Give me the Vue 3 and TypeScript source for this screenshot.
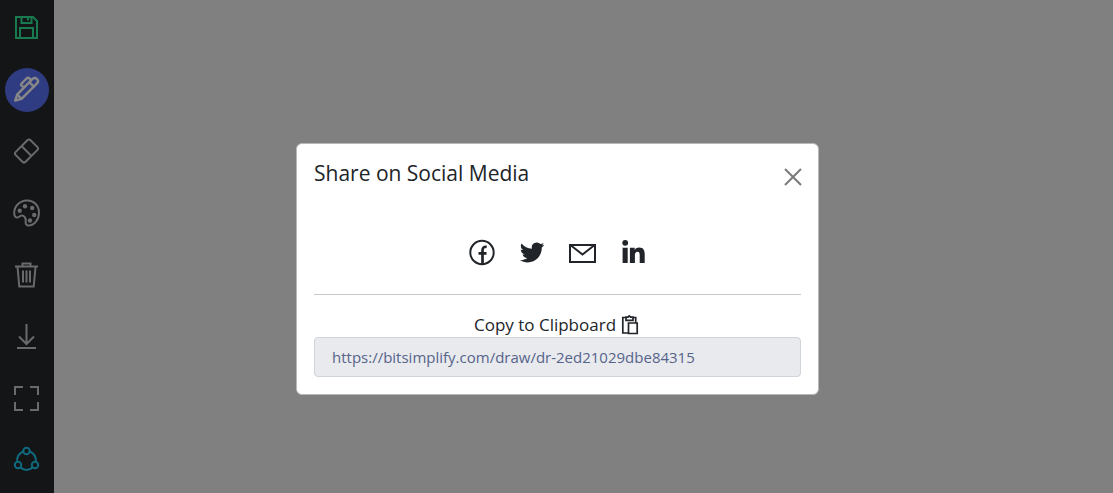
<script setup lang="ts">
import { ref } from 'vue'

const open = ref(true)
const link = ref('https://bitsimplify.com/draw/dr-2ed21029dbe84315')

function copyLink(): void {
  navigator.clipboard?.writeText(link.value)
}
</script>

<template>
  <div class="page">
    <nav class="toolbar" aria-label="Drawing tools">
      <button type="button" class="tool save" aria-label="Save">
        <svg viewBox="0 0 28 28" fill="none" stroke="currentColor" stroke-width="2">
          <path d="M3 3H20L24 7V24H3Z" />
          <path d="M8.500 3V9H18.500V3M15 3V6.500" />
          <path d="M7 24V14H20V24" />
        </svg>
      </button>
      <button type="button" class="tool active" aria-label="Pen">
        <svg viewBox="0 0 28 28" fill="none" stroke="currentColor" stroke-width="2.400" stroke-linejoin="round" stroke-linecap="round">
          <path d="M2.200 24.500L4.200 18.600L19.200 3.100C20.700 1.600 22.700 1.600 24 3C25.300 4.300 25.300 6.100 24 7.400L8.500 22.900Z" />
          <path d="M4.300 18.700L8.400 22.800M16.500 6.300L20.800 10.600" />
          <path d="M18 4.500L16.500 2.500C15.700 1.500 14.500 1.500 13.700 2.300L9 7" />
          <path d="M10.700 11L8.500 9.800C7.700 8.700 8 7.800 9.300 7" />
        </svg>
      </button>
      <button type="button" class="tool" aria-label="Eraser">
        <svg viewBox="0 0 28 28" fill="none" stroke="currentColor" stroke-width="2">
          <rect x="3" y="7" width="21" height="14" rx="2.300" transform="rotate(-45 13.500 14)" />
          <path d="M8.500 9L18.500 19" />
        </svg>
      </button>
      <button type="button" class="tool" aria-label="Colours">
        <svg viewBox="0 0 28 28" fill="none" stroke="currentColor" stroke-width="2">
          <path d="M13.500 1.500C20.800 1 26 6.500 26 13.500C26 20.500 21.500 26.500 15.500 26.500C12.600 26.500 12.500 24.500 12.700 22C13 18.800 11.300 16.500 8.800 16.500C7 16.500 6 18.500 4 18.500C1.800 18.500 1.200 16 1.200 13.800C1.400 7 6.500 1.900 13.500 1.500Z" />
          <g fill="currentColor" stroke="none">
            <circle cx="6.700" cy="11.700" r="2.200" /><circle cx="12" cy="7.300" r="2.200" />
            <circle cx="19.200" cy="9" r="2.200" /><circle cx="21.200" cy="16" r="2.200" />
            <circle cx="17" cy="21.500" r="2.200" />
          </g>
        </svg>
      </button>
      <button type="button" class="tool" aria-label="Delete">
        <svg viewBox="0 0 28 28" fill="none" stroke="currentColor" stroke-width="2">
          <path d="M2 5.500H25M9.500 5V2.500H17.500V5M4.500 6L6.300 25.500H20.700L22.500 6" />
          <path d="M10 9.500V21.500M13.500 9.500V21.500M17 9.500V21.500" />
        </svg>
      </button>
      <button type="button" class="tool" aria-label="Download">
        <svg viewBox="0 0 28 28" fill="none" stroke="currentColor" stroke-width="2">
          <path d="M13.500 1V21M6 13.500L13.500 21L21 13.500M4 25H23" />
        </svg>
      </button>
      <button type="button" class="tool" aria-label="Full screen">
        <svg viewBox="0 0 28 28" fill="none" stroke="currentColor" stroke-width="2">
          <path d="M10 3H2V11M17 3H25V11M25 18V26H17M10 26H2V18" />
        </svg>
      </button>
      <button type="button" class="tool share" aria-label="Share" @click="open = true">
        <svg viewBox="0 0 28 28" fill="none" stroke="currentColor" stroke-width="2">
          <circle cx="13.500" cy="5" r="3.200" /><circle cx="5" cy="19" r="3.200" /><circle cx="22" cy="19" r="3.200" />
          <path d="M10.300 5.500C6 7.300 3.700 11 4.200 15.800M16.700 5.500C21 7.300 23.300 11 22.800 15.800M7.300 21.300C10.800 25 16.200 25 19.700 21.300" />
        </svg>
      </button>
    </nav>

    <div v-if="open" class="overlay">
      <section class="dialog" role="dialog" aria-modal="true" aria-labelledby="share-title">
        <header class="head">
          <h1 id="share-title">Share on Social Media</h1>
          <button type="button" class="close" aria-label="Close" @click="open = false">
            <svg viewBox="0 0 18 18" fill="none" stroke="currentColor" stroke-width="2"><path d="M1 1L17 17M17 1L1 17" /></svg>
          </button>
        </header>
        <div class="socials">
          <a href="#facebook" aria-label="Facebook">
            <svg viewBox="0 0 28 28" fill="none" stroke="currentColor" stroke-width="2">
              <circle cx="15" cy="13.500" r="11.700" />
              <path stroke-width="2.700" d="M15.500 25.500V11.500C15.500 8.500 16.900 7.500 19.700 7.800M11.500 14.300H19.500" />
            </svg>
          </a>
          <a href="#twitter" aria-label="Twitter">
            <svg viewBox="0 0 28 28" fill="currentColor">
              <path d="M26.300 5.800C25.400 6.200 24.500 6.400 23.500 6.600C24.500 6 25.300 5 25.600 3.900C24.700 4.500 23.600 4.900 22.500 5.100A5.050 5.050 0 0 0 13.900 9.700C9.700 9.500 6 7.500 3.500 4.400C2.200 6.700 2.800 9.600 5.100 11.100C4.300 11.100 3.500 10.800 2.800 10.500C2.800 12.900 4.500 14.900 6.800 15.400C6.100 15.600 5.300 15.700 4.500 15.500C5.200 17.500 7 19 9.200 19C7.100 20.600 4.500 21.400 1.800 21.100C4.100 22.600 6.800 23.400 9.500 23.400C18.300 23.400 23.800 16.200 23.800 9V8.400C24.800 7.700 25.700 6.800 26.300 5.800Z" />
            </svg>
          </a>
          <a href="#email" aria-label="Email">
            <svg viewBox="0 0 28 28" fill="none" stroke="currentColor" stroke-width="2">
              <path d="M1 6H26V23H1ZM2 6.500L13.500 15.500L25 6.500" />
            </svg>
          </a>
          <a href="#linkedin" aria-label="LinkedIn">
            <svg viewBox="0 0 28 28" fill="currentColor">
              <circle cx="5.200" cy="3.800" r="2.900" />
              <path d="M2.600 8.800H7.700V24H2.600ZM9.900 8.800H14.700V10.900C15.700 9.300 17.200 8.500 19.200 8.500C23.500 8.500 24.700 11.300 24.700 15.300V24H19.700V16.100C19.700 14.100 19.400 12.800 17.700 12.800C15.700 12.800 14.900 14.200 14.900 16.300V24H9.900Z" />
            </svg>
          </a>
        </div>
        <hr />
        <div class="copy">
          <label for="share-link">Copy to Clipboard</label>
          <button type="button" aria-label="Copy link" @click="copyLink">
            <svg viewBox="0 0 20 20" fill="none" stroke="currentColor" stroke-width="1.700">
              <path d="M7.500 18H1.800V2.500H5M12 2.500H14.700V8M5 2.200H7L8.300 .9L9.700 2.200H12V5.300H5Z" />
              <path d="M7.500 8H16.200V18.500H7.500Z" />
            </svg>
          </button>
        </div>
        <input id="share-link" type="text" readonly :value="link" />
      </section>
    </div>
  </div>
</template>

<style>
body {
  margin: 0;
  background: #808080;
}
</style>

<style scoped>
* {
  box-sizing: border-box;
}

.page {
  display: flex;
  min-height: 100vh;
  background: #808080;
  color: #212529;
  font-family: "Open Sans", "Noto Sans", sans-serif;
}

button {
  display: flex;
  align-items: center;
  justify-content: center;
  padding: 0;
  border: 0;
  background: none;
  color: inherit;
  cursor: pointer;
}

svg {
  display: block;
}

.toolbar {
  display: flex;
  flex-direction: column;
  align-items: center;
  justify-content: space-between;
  width: 54px;
  padding: 6px 0 11px;
  background: #131516;
}

.tool {
  width: 44px;
  height: 44px;
  border-radius: 50%;
  color: #686a6b;
}

.tool svg {
  width: 28px;
  height: 28px;
}

.tool.save {
  color: #197a4f;
}

.tool.active {
  background: #303c82;
  color: #878787;
}

.tool.share {
  color: #10697d;
}

.overlay {
  position: fixed;
  inset: 0;
  padding: 143px 16px 16px 18px;
}

.dialog {
  width: 100%;
  max-width: 523px;
  margin: 0 auto;
  padding: 17px;
  border: 1px solid #b8b8b8;
  border-radius: 6px;
  background: #fff;
}

.head {
  display: flex;
  justify-content: space-between;
}

h1 {
  margin: 0;
  font-size: 21px;
  font-weight: 400;
  line-height: 24px;
}

.close {
  width: 16px;
  height: 32px;
  color: #7a7a7a;
}

.close svg {
  flex: none;
  width: 18px;
  height: 18px;
}

.socials {
  display: flex;
  justify-content: center;
  gap: 23px;
  margin-top: 46px;
}

.socials a {
  color: #212529;
}

.socials svg {
  width: 28px;
  height: 28px;
}

hr {
  margin: 27px 0 17px;
  border: 0;
  border-top: 1px solid #c8c9ca;
}

.copy {
  display: flex;
  align-items: center;
  justify-content: center;
  gap: 5px;
  font-size: 17px;
  line-height: 25px;
}

.copy svg {
  width: 20px;
  height: 20px;
}

input {
  display: block;
  width: 100%;
  height: 40px;
  padding: 0 17px;
  border: 1px solid #ced4da;
  border-radius: 4px;
  background: #e8eaee;
  color: #56648a;
  font: inherit;
  font-size: 15px;
}
</style>
